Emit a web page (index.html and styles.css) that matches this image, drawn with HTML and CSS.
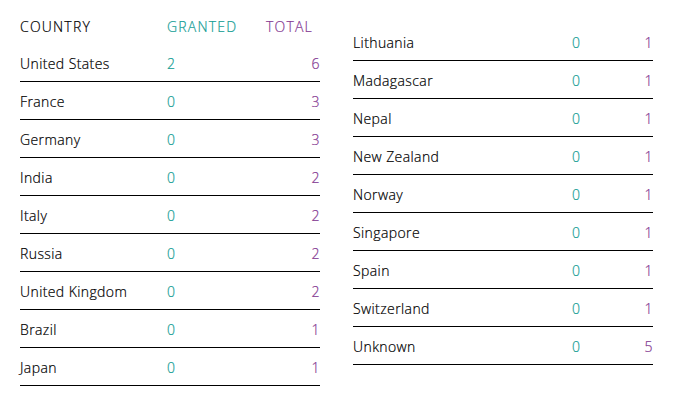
FILE: index.html
```html
<!DOCTYPE html>
<html>
<head>
<meta charset="utf-8">
<link rel="stylesheet" href="styles.css">
</head>
<body>
<div class="page">
  <div class="table left">
    <div class="row head">
      <span class="c-name">COUNTRY</span>
      <span class="c-granted">GRANTED</span>
      <span class="c-total">TOTAL</span>
    </div>
    <div class="row"><span class="c-name">United States</span><span class="c-granted">2</span><span class="c-total">6</span></div>
    <div class="row"><span class="c-name">France</span><span class="c-granted">0</span><span class="c-total">3</span></div>
    <div class="row"><span class="c-name">Germany</span><span class="c-granted">0</span><span class="c-total">3</span></div>
    <div class="row"><span class="c-name">India</span><span class="c-granted">0</span><span class="c-total">2</span></div>
    <div class="row"><span class="c-name">Italy</span><span class="c-granted">0</span><span class="c-total">2</span></div>
    <div class="row"><span class="c-name">Russia</span><span class="c-granted">0</span><span class="c-total">2</span></div>
    <div class="row"><span class="c-name">United Kingdom</span><span class="c-granted">0</span><span class="c-total">2</span></div>
    <div class="row"><span class="c-name">Brazil</span><span class="c-granted">0</span><span class="c-total">1</span></div>
    <div class="row"><span class="c-name">Japan</span><span class="c-granted">0</span><span class="c-total">1</span></div>
  </div>
  <div class="table right">
    <div class="row"><span class="c-name">Lithuania</span><span class="c-granted">0</span><span class="c-total">1</span></div>
    <div class="row"><span class="c-name">Madagascar</span><span class="c-granted">0</span><span class="c-total">1</span></div>
    <div class="row"><span class="c-name">Nepal</span><span class="c-granted">0</span><span class="c-total">1</span></div>
    <div class="row"><span class="c-name">New Zealand</span><span class="c-granted">0</span><span class="c-total">1</span></div>
    <div class="row"><span class="c-name">Norway</span><span class="c-granted">0</span><span class="c-total">1</span></div>
    <div class="row"><span class="c-name">Singapore</span><span class="c-granted">0</span><span class="c-total">1</span></div>
    <div class="row"><span class="c-name">Spain</span><span class="c-granted">0</span><span class="c-total">1</span></div>
    <div class="row"><span class="c-name">Switzerland</span><span class="c-granted">0</span><span class="c-total">1</span></div>
    <div class="row"><span class="c-name">Unknown</span><span class="c-granted">0</span><span class="c-total">5</span></div>
  </div>
</div>
</body>
</html>
```
FILE: styles.css
```css
html, body {
  margin: 0;
  padding: 0;
  background: #ffffff;
}
body {
  font-family: "Open Sans", "Liberation Sans", sans-serif;
  font-weight: 300;
  font-size: 14px;
  letter-spacing: 0.4px;
  color: #000000;
  -webkit-text-stroke: 0.2px currentColor;
}
.page {
  display: flex;
  align-items: flex-start;
  gap: 33px;
  padding: 7px 0 0 20px;
}
.table {
  width: 300px;
  display: flex;
  flex-direction: column;
}
.right {
  margin-top: 16px;
}
.row {
  display: grid;
  align-items: center;
  border-bottom: 1px solid #000000;
  line-height: 20px;
  padding-top: 2px;
  height: 35px;
}
.row.head {
  border-bottom: none;
  letter-spacing: 1.2px;
}
.left .row {
  grid-template-columns: 147px 99px 1fr;
}
.right .row {
  grid-template-columns: 219px 40px 1fr;
}
.c-granted {
  color: #149e95;
}
.c-total {
  color: #853a93;
  text-align: right;
}
.head .c-total {
  text-align: left;
}
```
